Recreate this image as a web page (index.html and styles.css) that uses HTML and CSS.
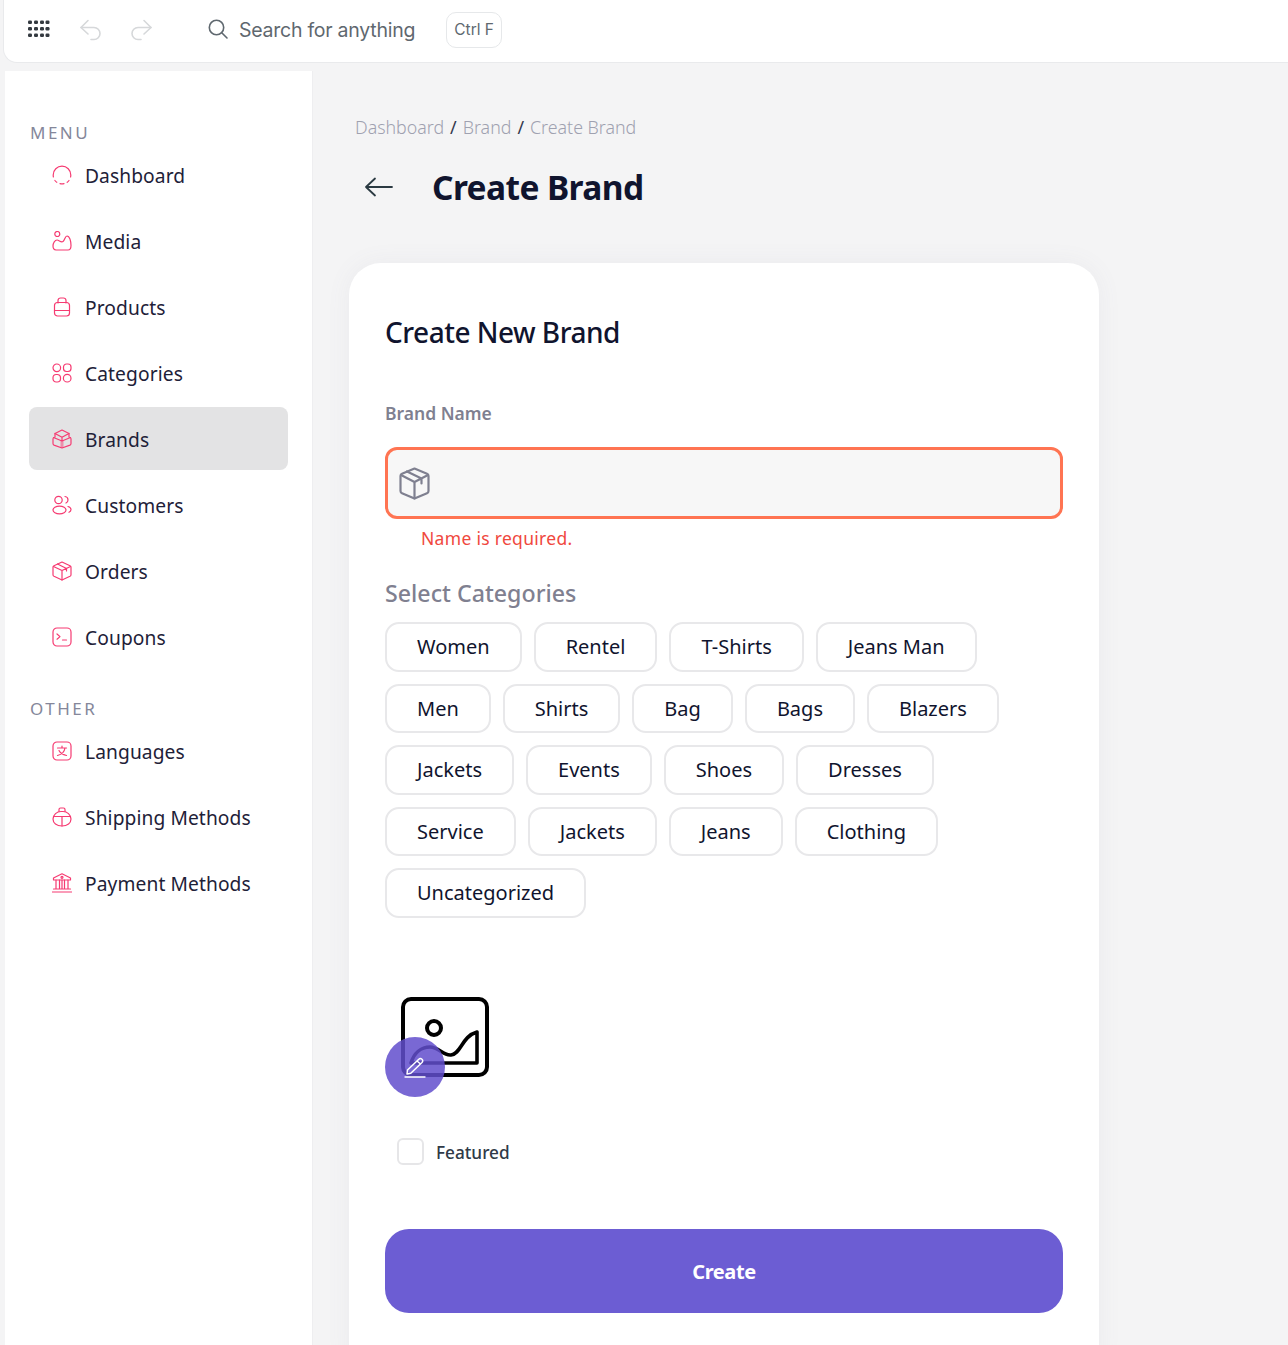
FILE: index.html
```html
<!DOCTYPE html>
<html lang="en">
<head>
<meta charset="utf-8">
<title>Create Brand</title>
<link rel="stylesheet" href="styles.css">
</head>
<body>
<header class="topbar">
  <svg class="grid-icon" width="24" height="24" viewBox="0 0 24 24" fill="#343a40"><rect x="1" y="2.500" width="4" height="3.400" rx="1.200"/><rect x="7" y="2.500" width="4" height="3.400" rx="1.200"/><rect x="13" y="2.500" width="4" height="3.400" rx="1.200"/><rect x="18.500" y="2.500" width="4" height="3.400" rx="1.200"/><rect x="1" y="9" width="4" height="3.400" rx="1.200"/><rect x="7" y="9" width="4" height="3.400" rx="1.200"/><rect x="13" y="9" width="4" height="3.400" rx="1.200"/><rect x="18.500" y="9" width="4" height="3.400" rx="1.200"/><rect x="1" y="15.500" width="4" height="3.400" rx="1.200"/><rect x="7" y="15.500" width="4" height="3.400" rx="1.200"/><rect x="13" y="15.500" width="4" height="3.400" rx="1.200"/><rect x="18.500" y="15.500" width="4" height="3.400" rx="1.200"/></svg>
  <svg class="undo" width="24" height="24" viewBox="0 0 24 24" fill="none" stroke="#d6d8da" stroke-width="1.600" stroke-linecap="round" stroke-linejoin="round"><path d="M9 2.500 2 9.500l7 6.500"/><path d="M2 9.500h13a6 6 0 0 1 6 6 6 6 0 0 1-6 6h-3"/></svg>
  <svg class="redo" width="24" height="24" viewBox="0 0 24 24" fill="none" stroke="#d6d8da" stroke-width="1.600" stroke-linecap="round" stroke-linejoin="round"><path d="M15 2.500l7 7-7 6.500"/><path d="M22 9.500H9a6 6 0 0 0-6 6 6 6 0 0 0 6 6h3"/></svg>
  <svg class="search-icon" width="22" height="22" viewBox="0 0 22 22" fill="none" stroke="#5f686f" stroke-width="1.600" stroke-linecap="round"><circle cx="9.500" cy="9.500" r="7.200"/><path d="m15 15 5 5"/></svg>
  <span class="search-text">Search for anything</span>
  <span class="kbd">Ctrl F</span>
</header>

<div class="layout">
  <aside class="sidebar">
    <div class="nav-label">MENU</div>
    <nav class="nav-group">
      <a class="nav-item"><svg class="nav-icon" viewBox="0 0 20 20"><path d="M1.400 12A8.800 8.800 0 0 1 1.200 10 8.800 8.800 0 0 1 10 1.200 8.800 8.800 0 0 1 18.800 10c0 .7-.1 1.400-.2 2M17 15.500c-.5.700-1.100 1.300-1.800 1.800M12 18.600a9 9 0 0 1-4 0M4.800 17.300C4 16.800 3.400 16.200 2.900 15.500"/></svg>Dashboard</a>
      <a class="nav-item"><svg class="nav-icon" viewBox="0 0 20 20"><circle cx="5.300" cy="3" r="2.500"/><path d="M1 15c0-3 2-6 4-6s4 3 6 1.500S13 5 15 5c2.500 0 4 5 4 9.500 0 3-1 4.500-3 4.500H4c-2 0-3-1.500-3-4Z"/></svg>Media</a>
      <a class="nav-item"><svg class="nav-icon" viewBox="0 0 20 20"><path d="M6 6V3.500a2.500 2.500 0 0 1 2.500-2.500h3A2.500 2.500 0 0 1 14 3.500V6"/><path d="M2.500 8.500A3 3 0 0 1 5 5.500h10a3 3 0 0 1 2.500 3V16a3 3 0 0 1-3 3h-9a3 3 0 0 1-3-3Z"/><path d="M2.500 13.500h15"/></svg>Products</a>
      <a class="nav-item"><svg class="nav-icon" viewBox="0 0 20 20"><circle cx="4.800" cy="4.800" r="3.800"/><rect x="11.500" y="1" width="7.500" height="7.500" rx="3"/><rect x="1" y="11.500" width="7.500" height="7.500" rx="3.200"/><circle cx="15.200" cy="15.200" r="3.800"/></svg>Categories</a>
      <a class="nav-item is-active"><svg class="nav-icon" viewBox="0 0 20 20"><path d="M10 1 3 4.500V8c-1.300.3-2 .8-2 1.800v4.700c0 .8.400 1.300 1 1.600L10 19l8-2.900c.6-.3 1-.8 1-1.600V9.800c0-1-.7-1.500-2-1.800V4.500Z"/><path d="m3 4.500 7 3.700 7-3.700M10 8.200v3.300M1.500 8.500 10 12l8.500-3.500"/><path class="box-fill" d="M8.500 12h3v7h-3Z"/></svg>Brands</a>
      <a class="nav-item"><svg class="nav-icon" viewBox="0 0 20 20"><circle cx="6.500" cy="5" r="3.700"/><path d="M13 1.500c2 .2 3 1.700 3 3.500 0 1.300-.8 2.400-2 3"/><ellipse cx="7.500" cy="15" rx="6.500" ry="3.800"/><path d="M16 11.500c2 .6 3 1.700 3 3s-.8 2.200-2 2.800"/></svg>Customers</a>
      <a class="nav-item"><svg class="nav-icon" viewBox="0 0 20 20"><path d="M10 1 2 4.700c-.6.300-1 .9-1 1.600v7.400c0 .7.400 1.300 1 1.600L10 19l8-3.700c.6-.3 1-.9 1-1.600V6.300c0-.7-.4-1.300-1-1.600Z"/><path d="m1.500 5.500 8.500 4 8.500-4M10 9.500V19M5.500 3 14.500 7.500V10"/></svg>Orders</a>
      <a class="nav-item"><svg class="nav-icon" viewBox="0 0 20 20"><rect x="1" y="1" width="18" height="18" rx="4"/><path d="m5 7 3 2.600-3 2.600M10.500 13h4"/></svg>Coupons</a>
    </nav>
    <div class="nav-label nav-label-other">OTHER</div>
    <nav class="nav-group">
      <a class="nav-item"><svg class="nav-icon" viewBox="0 0 20 20"><rect x="1" y="1" width="18" height="18" rx="4"/><path d="M5.500 7h9M10 5v2M13 7c-.5 3.500-3.500 6.500-7.500 7.500M7 9.500c1 2.200 3.500 4 7.500 5"/></svg>Languages</a>
      <a class="nav-item"><svg class="nav-icon" viewBox="0 0 20 20"><path d="M7 4.500V2.500C7 1.700 7.700 1 8.500 1h3c.8 0 1.500.7 1.500 1.500v2"/><path d="M1 12a8 8 0 0 1 8-7.500h2a8 8 0 0 1 8 7.500c0 4-3.500 7-9 7s-9-3-9-7Z"/><path d="M1.500 9.500h17M10 9.500V19"/></svg>Shipping Methods</a>
      <a class="nav-item"><svg class="nav-icon nav-icon-bank" viewBox="0 0 20 20"><path d="M10 .8 1.500 5v2h17V5Z"/><circle cx="10" cy="4.300" r="1"/><path d="M4 7v9M7.500 7v9M10 7v9M12.500 7v9M16 7v9M1.500 16h17M.5 19h19"/></svg>Payment Methods</a>
    </nav>
  </aside>

  <main class="content">
    <div class="breadcrumb"><span>Dashboard</span><b>/</b><span>Brand</span><b>/</b><span>Create Brand</span></div>
    <div class="page-head">
      <svg class="back" width="30" height="24" viewBox="0 0 30 24" fill="none" stroke="#2b3a42" stroke-width="1.800" stroke-linecap="round" stroke-linejoin="round"><path d="M2 12h26M11 3.500 2 12l9 8.500"/></svg>
      <h1>Create Brand</h1>
    </div>
    <section class="card">
      <h2>Create New Brand</h2>
      <label class="field-label">Brand Name</label>
      <div class="input">
        <svg width="33" height="33" viewBox="0 0 33 33" fill="none" stroke="#7f8090" stroke-width="2.200" stroke-linejoin="round" stroke-linecap="round"><path d="M16.500 1.500 4 6.800c-1 .4-1.500 1.200-1.500 2.200v15c0 1 .5 1.800 1.500 2.200l12.500 5.300L29 26.200c1-.4 1.500-1.200 1.500-2.200V9c0-1-.5-1.800-1.500-2.200Z"/><path d="m3 8 13.500 7L30 8M16.500 15v16.500M9 4.500 23.500 11.500v5"/></svg>
      </div>
      <p class="error">Name is required.</p>
      <h3>Select Categories</h3>
      <div class="chips">
        <span class="chip">Women</span><span class="chip">Rentel</span><span class="chip">T-Shirts</span><span class="chip">Jeans Man</span>
        <span class="chip">Men</span><span class="chip">Shirts</span><span class="chip">Bag</span><span class="chip">Bags</span><span class="chip">Blazers</span>
        <span class="chip">Jackets</span><span class="chip">Events</span><span class="chip">Shoes</span><span class="chip">Dresses</span>
        <span class="chip">Service</span><span class="chip">Jackets</span><span class="chip">Jeans</span><span class="chip">Clothing</span>
        <span class="chip">Uncategorized</span>
      </div>
      <div class="upload">
        <svg class="upload-art" width="88" height="80" viewBox="0 0 88 80" fill="none" stroke="#000" stroke-width="4" stroke-linejoin="round"><rect x="2" y="2" width="84" height="76" rx="8"/><circle cx="33" cy="31" r="7"/><path d="M10 66c3-10 10-16 19-16 9 0 13 9 21 8 10-1 11-19 26-23v31Z" stroke-width="3.600"/></svg>
        <span class="edit-badge"><svg width="22" height="22" viewBox="0 0 22 22" fill="none" stroke="#fff" stroke-width="1.500" stroke-linejoin="round" stroke-linecap="round"><path d="M3.500 14 3 18l3.800-.8L18 6.500c1-1 1-2.300 0-3.200s-2.300-1-3.200 0ZM13 5l3.500 3"/><path d="M1 21h20" stroke-width="1.300"/></svg></span>
      </div>
      <label class="check"><span class="box"></span><span class="check-text">Featured</span></label>
      <button class="submit" type="button">Create</button>
    </section>
  </main>
</div>
</body>
</html>
```
FILE: styles.css
```css
* { box-sizing: border-box; }
html, body { margin: 0; height: 1345px; overflow: hidden; }
body {
  background: #f4f4f5;
  font-family: "Noto Sans", sans-serif;
  color: #14172f;
}
.topbar {
  height: 63px;
  margin-left: 3px;
  background: #fff;
  border: 1px solid #e9eaec;
  border-width: 0 0 1px 1px;
  border-bottom-left-radius: 14px;
  display: flex;
  align-items: center;
  padding: 0 0 3px 23px;
  margin-bottom: 8px;
}
.undo { margin-left: 28px; }
.redo { margin-left: 26px; }
.search-icon { margin-left: 54px; margin-top: -2px; }
.search-text {
  font-family: Inter, sans-serif;
  font-size: 19.500px;
  letter-spacing: -.25px;
  color: #5f686f;
  margin-left: 10px;
}
.kbd {
  font-family: Inter, sans-serif;
  font-size: 15.500px;
  color: #5f686f;
  margin-left: 31px;
  height: 36px;
  width: 56px;
  border: 1px solid #e6e8ea;
  border-radius: 10px;
  display: flex;
  align-items: center;
  justify-content: center;
}
.layout { display: flex; margin-left: 5px; height: 1274px; }
.sidebar {
  width: 308px;
  flex: none;
  background: #fff;
  border-right: 1px solid #eeeef0;
  padding: 49px 24px 0;
}
.nav-label {
  font-size: 17px;
  line-height: 24px;
  letter-spacing: 2.500px;
  color: #85879a;
  padding-left: 1px;
  margin-top: 1px;
}
.nav-label-other { margin-top: 29px; }
.nav-group { display: flex; flex-direction: column; gap: 3px; margin-top: -2px; }
.nav-item {
  height: 63px;
  width: 259px;
  display: flex;
  align-items: center;
  padding: 1px 0 0 23px;
  font-size: 19.200px;
  letter-spacing: .1px;
  color: #1e2138;
  border-radius: 8px;
}
.is-active { background: #e3e3e4; }
.nav-icon {
  width: 20px;
  height: 20px;
  margin-right: 13px;
  margin-top: -1px;
  fill: none;
  stroke: #f63b72;
  stroke-width: 1.200;
  stroke-linecap: round;
  stroke-linejoin: round;
  flex: none;
}
.box-fill { fill: #f63b72; fill-opacity: .5; stroke: none; }
.content { flex: 1; padding: 44px 0 0 36px; min-width: 0; }
.breadcrumb {
  display: flex;
  gap: 6px;
  padding-left: 6px;
  font-size: 17.800px;
  line-height: 24px;
  color: #9fa1b0;
  font-weight: 300;
}
.breadcrumb b { font-weight: 400; color: #33384d; }
.page-head {
  display: flex;
  align-items: center;
  height: 52px;
  margin-top: 22px;
  padding-left: 15px;
}
.page-head h1 {
  margin: 0 0 0 38px;
  font-size: 33.500px;
  line-height: 52px;
  font-weight: 700;
  letter-spacing: -.6px;
  color: #10142e;
}
.card {
  width: 750px;
  height: 1120px;
  margin-top: 50px;
  background: #fff;
  border-radius: 32px;
  padding: 36px 36px 0;
  box-shadow: 0 0 24px rgba(120, 120, 135, .07);
}
.card h2 {
  margin: 0;
  font-size: 28px;
  line-height: 66px;
  font-weight: 500;
  letter-spacing: -.5px;
  color: #10142e;
}
.field-label {
  display: block;
  margin-top: 36px;
  font-size: 17.500px;
  line-height: 24px;
  font-weight: 600;
  color: #7f8090;
}
.input {
  margin-top: 22px;
  height: 72px;
  width: 678px;
  background: #f7f7f7;
  border: 3px solid #ff7452;
  border-radius: 12px;
  display: flex;
  align-items: center;
  padding-left: 10px;
}
.error {
  margin: 6px 0 0 36px;
  font-size: 17.500px;
  line-height: 26px;
  letter-spacing: .3px;
  color: #f0483e;
}
.card h3 {
  margin: 25px 0 0;
  font-size: 23.200px;
  line-height: 34px;
  font-weight: 500;
  color: #7f8090;
}
.chips {
  display: flex;
  flex-wrap: wrap;
  gap: 12px;
  width: 678px;
  margin-top: 12px;
}
.chip {
  height: 49.500px;
  padding: 0 30px;
  border: 2px solid #e8e8ea;
  border-radius: 14px;
  font-size: 20px;
  line-height: 46px;
  color: #10142e;
}
.upload { position: relative; margin-top: 79.500px; margin-left: 16px; width: 88px; height: 80px; }
.upload-art { display: block; }
.edit-badge {
  position: absolute;
  left: -16px;
  top: 40px;
  width: 60px;
  height: 60px;
  border-radius: 50%;
  background: rgba(98, 78, 205, .85);
  display: flex;
  align-items: center;
  justify-content: center;
}
.check {
  display: flex;
  align-items: center;
  margin: 61px 0 0 12px;
  font-size: 17.200px;
  font-weight: 500;
  color: #2f3a47;
}
.check-text { padding-top: 2px; }
.box {
  width: 27px;
  height: 27px;
  border: 2px solid #e6e6e8;
  border-radius: 6px;
  margin-right: 12px;
}
.submit {
  display: block;
  width: 678px;
  height: 84px;
  margin-top: 64px;
  border: 0;
  border-radius: 24px;
  background: #6c5dd3;
  color: #fff;
  font-family: "Noto Sans", sans-serif;
  font-size: 20px;
  font-weight: 700;
  letter-spacing: -.4px;
}
```
